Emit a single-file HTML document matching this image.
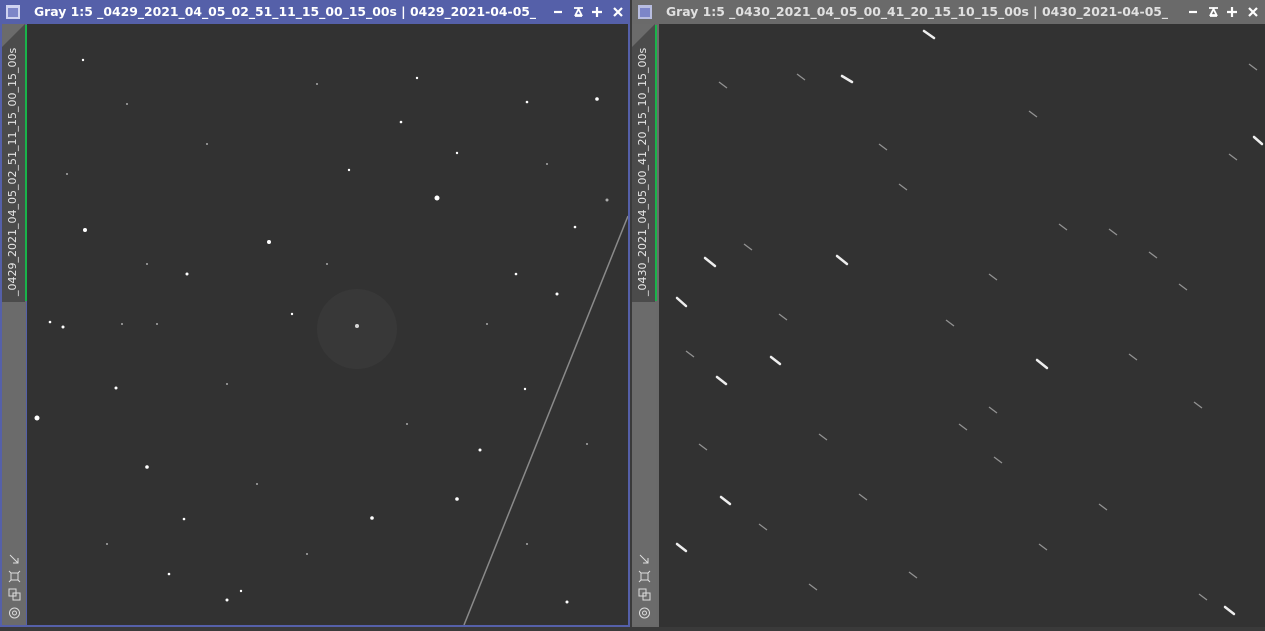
<!DOCTYPE html><html><head><style>
body{margin:0;width:1265px;height:627px;background:#3a3a3a;overflow:hidden;position:relative;font-family:"DejaVu Sans","Liberation Sans",sans-serif}
.win{position:absolute;top:0;height:627px}
.tb{position:absolute;left:0;right:0;top:0;height:24px;color:#fff;font-weight:bold;font-size:12.4px;line-height:23px}
.tb .t{position:absolute;left:34px;white-space:nowrap;width:502px;overflow:hidden}
.ico{position:absolute;left:6px;top:5px;width:10px;height:9px;border:2px solid #cfd3f0;background:#7d86c8;border-top-width:3px}
.btns{position:absolute;right:5px;top:5px}
.side{position:absolute;left:2px;top:24px;width:24px;bottom:2px;background:#6b6b6b}
.tab{position:absolute;left:0;top:0;width:23px;height:278px;background:#4b4b4b;clip-path:polygon(23px 0,23px 278px,0 278px,0 23px)}
.green{position:absolute;left:23px;top:1px;width:2px;height:276px;background:#19b34a}
.vt{position:absolute;left:4px;top:272px;transform:rotate(-90deg);transform-origin:0 0;color:#e6e6e6;font-size:11px;white-space:nowrap}
.img{position:absolute;top:24px;background:#323232}
.si{position:absolute;left:5px;top:528px}
</style></head><body>
<svg width="0" height="0" style="position:absolute"><defs>
<g id="btn" stroke="#fff" stroke-width="2.2" fill="none"><line x1="1" y1="7" x2="9" y2="7"/><path d="M21 3h9M22 11h7M25.5 4l-3 6h6z" stroke-width="1.8"/><path d="M44 2v10M39 7h10"/><path d="M61 3l8 8M69 3l-8 8"/></g>
<g id="sic" stroke="#ddd" stroke-width="1" fill="none"><path d="M3 3l8 8M6 11h5V6"/><rect x="4" y="21" width="7" height="7"/><path d="M2 19l2 2M13 19l-2 2M2 30l2-2M13 30l-2-2"/><rect x="2" y="37" width="7" height="7"/><rect x="6" y="41" width="7" height="7"/><circle cx="7.5" cy="61" r="5"/><circle cx="7.5" cy="61" r="2"/></g>
</defs></svg>
<div class="win" style="left:0;width:630px;background:#5560a9">
 <div class="tb" style="background:#5560a9"><div class="ico"></div><div class="t">Gray 1:5 _0429_2021_04_05_02_51_11_15_00_15_00s | 0429_2021-04-05_...</div><svg class="btns" width="72" height="14"><use href="#btn"/></svg></div>
 <div class="side"><div class="tab"></div><div class="green"></div><div class="vt">_0429_2021_04_05_02_51_11_15_00_15_00s</div>
 <svg class="si" width="16" height="70"><use href="#sic"/></svg></div>
 <div class="img" style="left:27px;width:601px;height:601px">
 <svg width="601" height="601"><g fill="#fff">
 <circle cx="410" cy="174" r="2.5"/><circle cx="58" cy="206" r="2"/><circle cx="242" cy="218" r="2"/><circle cx="10" cy="394" r="2.5"/><circle cx="570" cy="75" r="1.8"/><circle cx="160" cy="250" r="1.5"/><circle cx="345" cy="494" r="1.8"/><circle cx="430" cy="475" r="1.8"/><circle cx="120" cy="443" r="1.8"/><circle cx="330" cy="302" r="2" opacity=".8"/><circle cx="89" cy="364" r="1.5"/><circle cx="36" cy="303" r="1.5"/><circle cx="200" cy="576" r="1.5"/><circle cx="540" cy="578" r="1.5"/><circle cx="453" cy="426" r="1.5"/><circle cx="530" cy="270" r="1.5"/><circle cx="374" cy="98" r="1.3"/><circle cx="500" cy="78" r="1.3"/><circle cx="23" cy="298" r="1.3"/><circle cx="142" cy="550" r="1.3"/><circle cx="489" cy="250" r="1.3"/><circle cx="157" cy="495" r="1.3"/><circle cx="548" cy="203" r="1.3"/><circle cx="580" cy="176" r="1.5" opacity=".6"/><circle cx="390" cy="54" r="1.2"/><circle cx="430" cy="129" r="1.2"/><circle cx="322" cy="146" r="1.2"/><circle cx="265" cy="290" r="1.2"/><circle cx="56" cy="36" r="1.2"/><circle cx="214" cy="567" r="1.2"/><circle cx="498" cy="365" r="1.2"/></g>
 <g fill="#aaa"><circle cx="100" cy="80" r="1"/><circle cx="180" cy="120" r="1"/><circle cx="290" cy="60" r="1"/><circle cx="520" cy="140" r="1"/><circle cx="130" cy="300" r="1"/><circle cx="200" cy="360" r="1"/><circle cx="460" cy="300" r="1"/><circle cx="560" cy="420" r="1"/><circle cx="80" cy="520" r="1"/><circle cx="280" cy="530" r="1"/><circle cx="380" cy="400" r="1"/><circle cx="40" cy="150" r="1"/><circle cx="230" cy="460" r="1"/><circle cx="500" cy="520" r="1"/><circle cx="120" cy="240" r="1"/><circle cx="95" cy="300" r="1"/><circle cx="300" cy="240" r="1"/></g>
 <circle cx="330" cy="305" r="40" fill="#fff" opacity=".03"/>
 <line x1="601" y1="192" x2="437" y2="601" stroke="#8a8a8a" stroke-width="1.5"/></svg></div>
</div>
<div class="win" style="left:632px;width:633px;background:#6a6a6a">
 <div class="tb" style="background:#6a6a6a;color:#e0e0e0"><div class="ico" style="border-color:#b8bde0;background:#7d86c8"></div><div class="t">Gray 1:5 _0430_2021_04_05_00_41_20_15_10_15_00s | 0430_2021-04-05_...</div><svg class="btns" width="72" height="14"><use href="#btn"/></svg></div>
 <div class="side" style="left:0"><div class="tab"></div><div class="green"></div><div class="vt">_0430_2021_04_05_00_41_20_15_10_15_00s</div>
 <svg class="si" width="16" height="70"><use href="#sic"/></svg></div>
 <div class="img" style="left:27px;width:606px;height:603px">
 <svg width="606" height="603"><g stroke="#eee" stroke-width="2.5" stroke-linecap="round">
 <line x1="183" y1="52" x2="193" y2="58"/><line x1="46" y1="234" x2="56" y2="242"/><line x1="178" y1="232" x2="188" y2="240"/><line x1="18" y1="274" x2="27" y2="282"/><line x1="378" y1="336" x2="388" y2="344"/><line x1="112" y1="333" x2="121" y2="340"/><line x1="58" y1="353" x2="67" y2="360"/><line x1="18" y1="520" x2="27" y2="527"/><line x1="62" y1="473" x2="71" y2="480"/><line x1="566" y1="583" x2="575" y2="590"/><line x1="595" y1="113" x2="603" y2="120"/><line x1="265" y1="7" x2="275" y2="14"/></g>
 <g stroke="#aaa" stroke-width="1.3" opacity=".8">
 <line x1="60" y1="58" x2="68" y2="64"/><line x1="370" y1="87" x2="378" y2="93"/><line x1="400" y1="200" x2="408" y2="206"/><line x1="450" y1="205" x2="458" y2="211"/><line x1="287" y1="296" x2="295" y2="302"/><line x1="330" y1="383" x2="338" y2="389"/><line x1="535" y1="378" x2="543" y2="384"/><line x1="335" y1="433" x2="343" y2="439"/><line x1="100" y1="500" x2="108" y2="506"/><line x1="250" y1="548" x2="258" y2="554"/><line x1="490" y1="228" x2="498" y2="234"/><line x1="570" y1="130" x2="578" y2="136"/><line x1="138" y1="50" x2="146" y2="56"/><line x1="27" y1="327" x2="35" y2="333"/><line x1="160" y1="410" x2="168" y2="416"/><line x1="440" y1="480" x2="448" y2="486"/><line x1="540" y1="570" x2="548" y2="576"/><line x1="220" y1="120" x2="228" y2="126"/><line x1="85" y1="220" x2="93" y2="226"/><line x1="590" y1="40" x2="598" y2="46"/>
 <line x1="120" y1="290" x2="128" y2="296"/><line x1="240" y1="160" x2="248" y2="166"/><line x1="300" y1="400" x2="308" y2="406"/><line x1="470" y1="330" x2="478" y2="336"/><line x1="200" y1="470" x2="208" y2="476"/><line x1="380" y1="520" x2="388" y2="526"/><line x1="150" y1="560" x2="158" y2="566"/><line x1="520" y1="260" x2="528" y2="266"/><line x1="40" y1="420" x2="48" y2="426"/><line x1="330" y1="250" x2="338" y2="256"/></g></svg></div>
</div>
</body></html>
